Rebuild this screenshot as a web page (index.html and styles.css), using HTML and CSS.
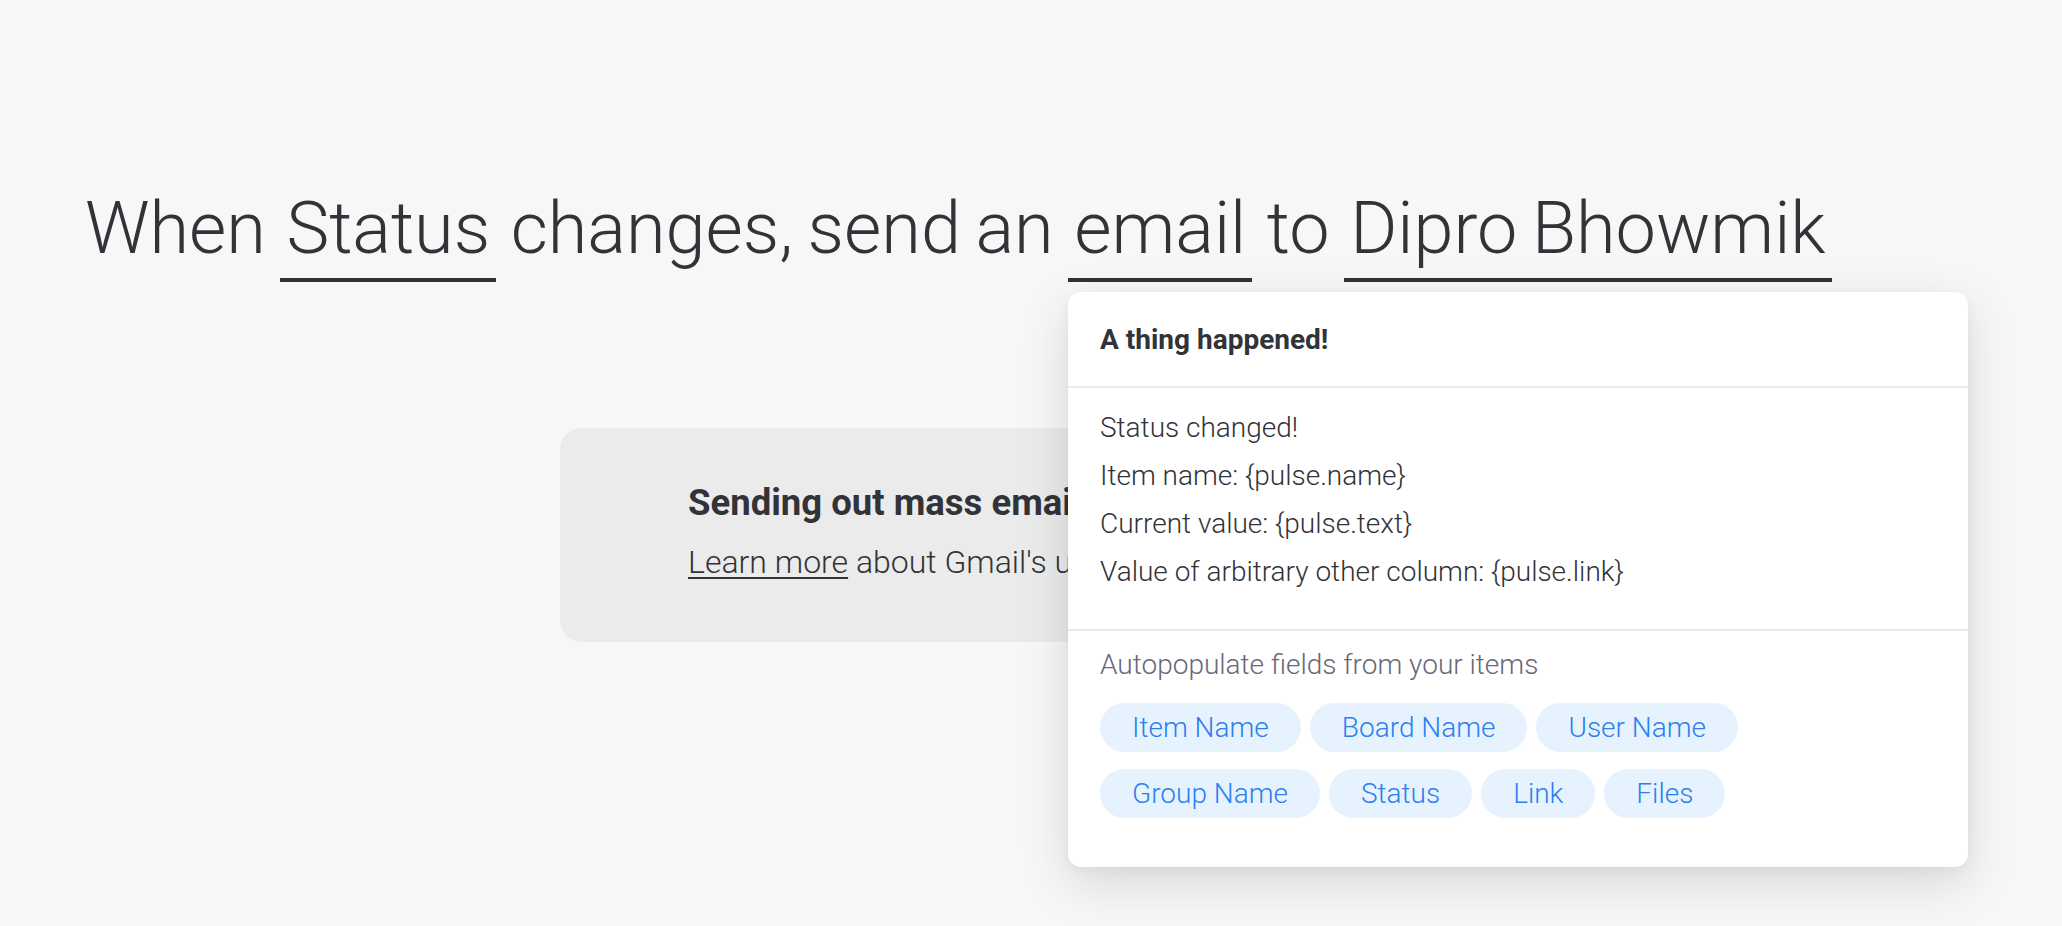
FILE: index.html
```html
<!DOCTYPE html>
<html lang="en">
<head>
<meta charset="utf-8">
<title>Automation recipe</title>
<link rel="stylesheet" href="styles.css">
</head>
<body>
<main class="page">
  <h1 class="sentence">When <span class="field">Status</span> changes, send an <span class="field">email</span> to <span class="field">Dipro Bhowmik</span></h1>
  <section class="notice">
    <div class="notice-title">Sending out mass emails?</div>
    <div class="notice-text"><a class="notice-link" href="#">Learn more</a> about Gmail's usage limits</div>
  </section>
  <div class="popover">
    <div class="pop-header">A thing happened!</div>
    <div class="pop-body">
      <div class="pop-line">Status changed!</div>
      <div class="pop-line">Item name: {pulse.name}</div>
      <div class="pop-line">Current value: {pulse.text}</div>
      <div class="pop-line">Value of arbitrary other column: {pulse.link}</div>
    </div>
    <div class="pop-footer">
      <div class="pop-hint">Autopopulate fields from your items</div>
      <div class="chips">
        <div class="chip-row">
          <span class="chip">Item Name</span>
          <span class="chip">Board Name</span>
          <span class="chip">User Name</span>
        </div>
        <div class="chip-row">
          <span class="chip">Group Name</span>
          <span class="chip">Status</span>
          <span class="chip">Link</span>
          <span class="chip">Files</span>
        </div>
      </div>
    </div>
  </div>
</main>
</body>
</html>
```

FILE: styles.css
```css
html, body {
  margin: 0;
  padding: 0;
}
body {
  background: #f7f7f7;
  color: #323338;
  font-family: Roboto, "Liberation Sans", sans-serif;
  width: 2062px;
  height: 926px;
  overflow: hidden;
}
.page {
  position: relative;
  height: 926px;
}
.sentence {
  margin: 0;
  padding: 185px 0 0 85px;
  font-size: 72px;
  font-weight: 300;
  line-height: 88px;
  word-spacing: -3px;
  white-space: nowrap;
  height: 97px;
}
.field {
  display: inline-block;
  padding: 0 6px 5px;
  border-bottom: 4px solid #323338;
  line-height: 88px;
}
.notice {
  box-sizing: border-box;
  width: 942px;
  height: 214px;
  margin: 146px auto 0;
  background: #ebebeb;
  border-radius: 22px;
  padding: 51px 0 0 128px;
}
.notice-title {
  font-size: 36.5px;
  font-weight: 700;
  line-height: 48px;
}
.notice-text {
  margin-top: 14px;
  font-size: 32px;
  font-weight: 300;
  line-height: 42px;
}
.notice-link {
  color: #323338;
  text-decoration: underline;
  text-underline-offset: 4px;
  text-decoration-thickness: 2px;
}
.popover {
  position: absolute;
  left: 1068px;
  top: 292px;
  width: 900px;
  background: #ffffff;
  border-radius: 13px;
  box-shadow: 0 16px 50px rgba(0, 0, 0, 0.13), 0 4px 12px rgba(0, 0, 0, 0.04);
}
.pop-header {
  height: 94px;
  display: flex;
  align-items: center;
  padding: 0 32px;
  font-size: 28px;
  font-weight: 700;
  border-bottom: 2px solid #e6e9ef;
}
.pop-body {
  padding: 16px 32px 33px;
  border-bottom: 2px solid #e6e9ef;
}
.pop-line {
  font-size: 28px;
  font-weight: 300;
  line-height: 48px;
  white-space: nowrap;
}
.pop-footer {
  padding: 16px 32px 49px;
}
.pop-hint {
  font-size: 28px;
  font-weight: 300;
  line-height: 36px;
  color: #676879;
}
.chips {
  margin-top: 20px;
  display: flex;
  flex-direction: column;
  gap: 17px;
}
.chip-row {
  display: flex;
  gap: 9px;
}
.chip {
  height: 49px;
  line-height: 49px;
  padding: 0 32px;
  border-radius: 25px;
  background: #e6f3fe;
  color: #2b7ff0;
  font-size: 28px;
  font-weight: 300;
  white-space: nowrap;
}
```
